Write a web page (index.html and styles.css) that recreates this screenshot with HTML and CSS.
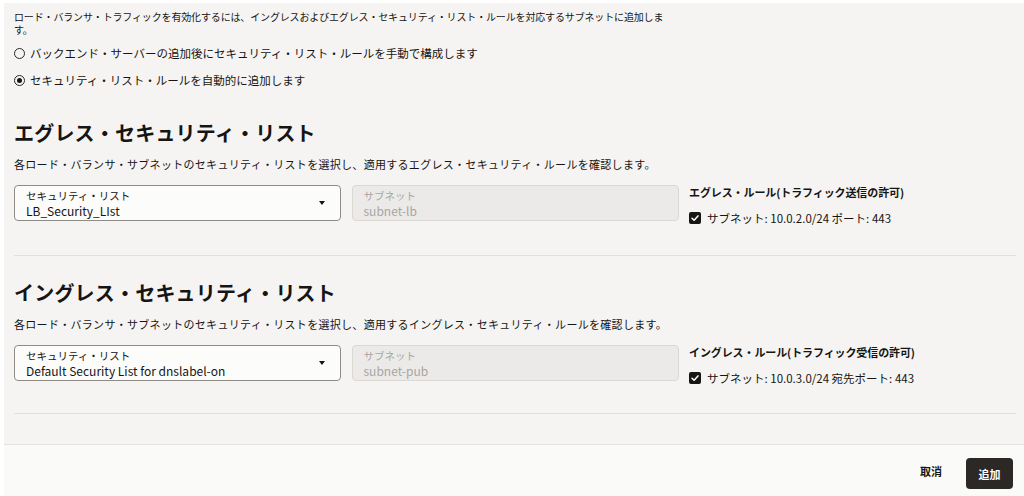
FILE: index.html
```html
<!DOCTYPE html>
<html lang="ja">
<head>
<meta charset="utf-8">
<link rel="stylesheet" href="styles.css">
</head>
<body>
<div class="panel">
  <p class="intro">ロード・バランサ・トラフィックを有効化するには、イングレスおよびエグレス・セキュリティ・リスト・ルールを対応するサブネットに追加します。</p>
  <div class="radios">
    <label class="radio"><span class="radio-dot"></span>バックエンド・サーバーの追加後にセキュリティ・リスト・ルールを手動で構成します</label>
    <label class="radio"><span class="radio-dot checked"></span>セキュリティ・リスト・ルールを自動的に追加します</label>
  </div>

  <section class="sec first">
    <h2 class="sec-title">エグレス・セキュリティ・リスト</h2>
    <p class="sec-desc">各ロード・バランサ・サブネットのセキュリティ・リストを選択し、適用するエグレス・セキュリティ・ルールを確認します。</p>
    <div class="row">
      <div class="field select">
        <div class="field-text">
          <span class="field-label">セキュリティ・リスト</span>
          <span class="field-value">LB_Security_LIst</span>
        </div>
        <span class="caret"></span>
      </div>
      <div class="field readonly">
        <div class="field-text">
          <span class="field-label">サブネット</span>
          <span class="field-value">subnet-lb</span>
        </div>
      </div>
      <div class="rules">
        <div class="rules-title">エグレス・ルール(トラフィック送信の許可)</div>
        <div class="check-row"><span class="check"><svg viewBox="0 0 12 12" width="12" height="12"><path d="M3 6.2 L5.1 8.3 L9 3.9" fill="none" stroke="#fff" stroke-width="1.5" stroke-linecap="round" stroke-linejoin="round"/></svg></span>サブネット: 10.0.2.0/24 ポート: 443</div>
      </div>
    </div>
  </section>

  <section class="sec second">
    <h2 class="sec-title">イングレス・セキュリティ・リスト</h2>
    <p class="sec-desc">各ロード・バランサ・サブネットのセキュリティ・リストを選択し、適用するイングレス・セキュリティ・ルールを確認します。</p>
    <div class="row">
      <div class="field select">
        <div class="field-text">
          <span class="field-label">セキュリティ・リスト</span>
          <span class="field-value">Default Security List for dnslabel-on</span>
        </div>
        <span class="caret"></span>
      </div>
      <div class="field readonly">
        <div class="field-text">
          <span class="field-label">サブネット</span>
          <span class="field-value">subnet-pub</span>
        </div>
      </div>
      <div class="rules">
        <div class="rules-title">イングレス・ルール(トラフィック受信の許可)</div>
        <div class="check-row"><span class="check"><svg viewBox="0 0 12 12" width="12" height="12"><path d="M3 6.2 L5.1 8.3 L9 3.9" fill="none" stroke="#fff" stroke-width="1.5" stroke-linecap="round" stroke-linejoin="round"/></svg></span>サブネット: 10.0.3.0/24 宛先ポート: 443</div>
      </div>
    </div>
  </section>
</div>
<footer class="footer">
  <button class="btn-cancel">取消</button>
  <button class="btn-add">追加</button>
</footer>
</body>
</html>
```

FILE: styles.css
```css
* { box-sizing: border-box; }
html, body { margin: 0; padding: 0; }
body {
  background: #ffffff;
  font-family: "Noto Sans CJK JP", "Noto Sans", sans-serif;
  color: #161513;
  width: 1024px;
  height: 496px;
  overflow: hidden;
  padding: 3px 0 0 4px;
}
.panel {
  background: #f5f4f2;
  height: 441px;
  padding: 7px 8px 0 10px;
  overflow: hidden;
}
.intro {
  margin: 0;
  font-size: 10px;
  line-height: 13px;
  max-width: 655px;
  letter-spacing: -0.15px;
  color: #161513;
}
.radios {
  display: flex;
  flex-direction: column;
  gap: 11px;
  margin-top: 9px;
}
.radio {
  display: flex;
  align-items: center;
  gap: 5px;
  font-size: 11.5px;
  line-height: 16px;
  letter-spacing: 0;
}
.radio-dot {
  width: 11px;
  height: 11px;
  border: 1.3px solid #2a2826;
  border-radius: 50%;
  display: inline-flex;
  align-items: center;
  justify-content: center;
  flex: none;
}
.radio-dot.checked::after {
  content: "";
  width: 5px;
  height: 5px;
  border-radius: 50%;
  background: #161513;
}
.sec {
  border-bottom: 1px solid #e2e0dc;
  padding-bottom: 30px;
}
.sec.first { margin-top: 31px; }
.sec.second { padding-top: 23px; padding-bottom: 28px; }
.sec-title {
  margin: 0;
  font-size: 20px;
  line-height: 28px;
  font-weight: 700;
  letter-spacing: 0.2px;
}
.sec-desc {
  margin: 9px 0 0;
  font-size: 11px;
  line-height: 16px;
  letter-spacing: 0.3px;
}
.row {
  margin-top: 13px;
  display: grid;
  grid-template-columns: repeat(3, 1fr);
  column-gap: 10.5px;
  align-items: start;
}
.field {
  height: 36px;
  border-radius: 4px;
  display: flex;
  align-items: center;
  padding: 0 11px 0 11px;
}
.field.select {
  background: #fcfcfb;
  border: 1px solid #8f8c88;
}
.field.readonly {
  background: #ebeae8;
  border: 1px solid #dad8d4;
  color: #a9a6a2;
}
.field-text {
  display: flex;
  flex-direction: column;
  flex: 1;
  min-width: 0;
}
.field-label {
  font-size: 10.5px;
  line-height: 14px;
}
.field-value {
  font-size: 12px;
  line-height: 15px;
  white-space: nowrap;
}
.caret {
  width: 0;
  height: 0;
  border-left: 3.5px solid transparent;
  border-right: 3.5px solid transparent;
  border-top: 4px solid #161513;
  margin-right: 4px;
}
.rules-title {
  font-size: 11px;
  line-height: 14px;
  font-weight: 700;
  letter-spacing: -0.1px;
}
.check-row {
  margin-top: 12px;
  display: flex;
  align-items: center;
  gap: 6px;
  font-size: 11.5px;
  line-height: 14px;
}
.check {
  width: 12px;
  height: 12px;
  background: #161513;
  border-radius: 2px;
  display: inline-flex;
  flex: none;
}
.check svg { display: block; }
.footer {
  height: 52px;
  background: #fafaf9;
  border-top: 1px solid #e4e2df;
  display: flex;
  align-items: center;
  justify-content: flex-end;
  padding-right: 11px;
  gap: 14px;
}
.footer button {
  font-family: "Noto Sans CJK JP", "Noto Sans", sans-serif;
  font-size: 11px;
  font-weight: 700;
  border: none;
  cursor: pointer;
}
.btn-cancel {
  background: transparent;
  color: #161513;
  padding: 0 10px;
  height: 31px;
}
.btn-add {
  background: #2b2826;
  color: #ffffff;
  height: 31px;
  width: 47px;
  border-radius: 4px;
  margin-top: 6px;
}
```
